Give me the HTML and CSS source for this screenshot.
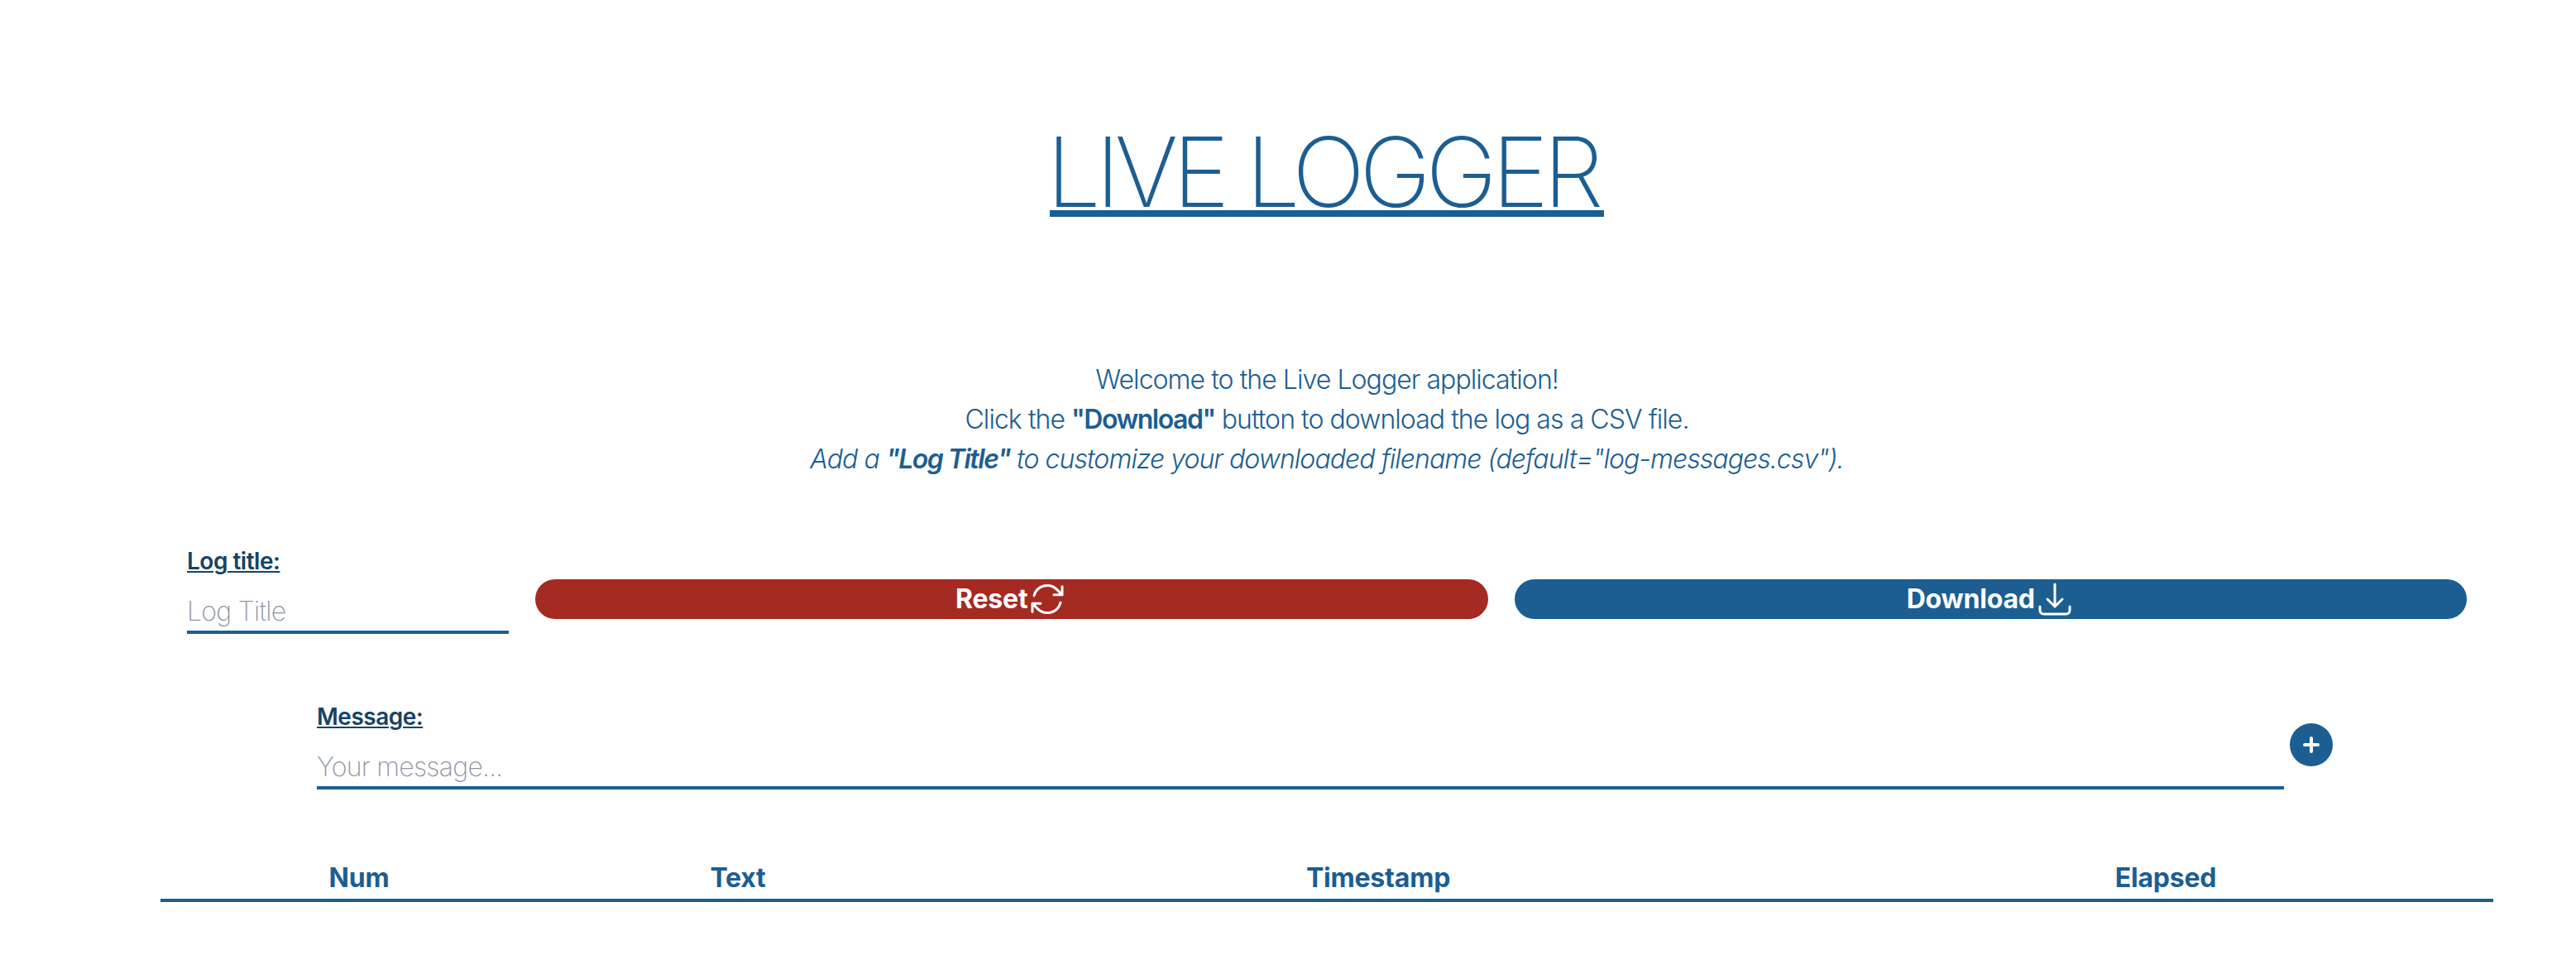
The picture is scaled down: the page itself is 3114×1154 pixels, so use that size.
FILE: index.html
```html
<!DOCTYPE html>
<html lang="en">
<head>
<meta charset="utf-8">
<title>Live Logger</title>
<link rel="stylesheet" href="styles.css">
</head>
<body>
<main class="page">
  <h1 class="title">LIVE LOGGER</h1>
  <section class="intro">
    <p>Welcome to the Live Logger application!</p>
    <p>Click the <strong>"Download"</strong> button to download the log as a CSV file.</p>
    <p><em>Add a <strong>"Log Title"</strong> to customize your downloaded filename (default="log-messages.csv").</em></p>
  </section>
  <section class="toolbar">
    <div class="field field-title">
      <label class="label" for="log-title">Log title:</label>
      <input class="input" id="log-title" type="text" placeholder="Log Title">
    </div>
    <button class="button button-reset" type="button">Reset
      <svg class="icon" viewBox="0 0 24 24"><path d="M16.023 9.348h4.992v-.001M2.985 19.644v-4.992m0 0h4.992m-4.993 0l3.181 3.183a8.25 8.25 0 0013.803-3.7M4.031 9.865a8.25 8.25 0 0113.803-3.7l3.181 3.182m0-4.991v4.99"/></svg>
    </button>
    <button class="button button-download" type="button">Download
      <svg class="icon" viewBox="0 0 24 24"><path d="M3 16.5v2.25A2.25 2.25 0 005.25 21h13.5A2.25 2.25 0 0021 18.75V16.5M16.5 12L12 16.5m0 0L7.5 12m4.5 4.5V3"/></svg>
    </button>
  </section>
  <section class="composer">
    <div class="field field-message">
      <label class="label" for="message">Message:</label>
      <input class="input" id="message" type="text" placeholder="Your message...">
    </div>
    <button class="add" type="button" aria-label="Add message">
      <svg class="add-icon" viewBox="0 0 20 20"><path d="M10 2v16M2 10h16"/></svg>
    </button>
  </section>
  <table class="log">
    <thead>
      <tr>
        <th class="col-num">Num</th>
        <th class="col-text">Text</th>
        <th class="col-time">Timestamp</th>
        <th class="col-elapsed">Elapsed</th>
      </tr>
    </thead>
  </table>
</main>
</body>
</html>
```
FILE: styles.css
```css
* { box-sizing: border-box; margin: 0; padding: 0; }
body {
  background: #fefefe;
  color: #1c5e92;
  font-family: Inter, "Liberation Sans", sans-serif;
  font-size: 32px;
  font-weight: 300;
  line-height: 48px;
}
.page { width: 2820px; margin-left: 194px; padding-top: 161px; }
.title {
  width: 670px;
  margin: 0 auto;
  border-bottom: 8px solid #1c5e92;
  font-size: 117px;
  font-weight: 230;
  letter-spacing: -6.7px;
  line-height: 93px;
  text-indent: -4px;
  white-space: nowrap;
}
.intro {
  margin-top: 173px;
  letter-spacing: -0.94px;
  text-align: center;
}
.intro strong { font-weight: 600; letter-spacing: -1.5px; }
.toolbar {
  display: flex;
  align-items: center;
  gap: 32px;
  margin-top: 79px;
  padding: 0 32px;
}
.field { display: flex; flex-direction: column; align-items: flex-start; }
.field-title { width: 389px; }
.label {
  color: #164363;
  font-size: 28px;
  font-weight: 600;
  letter-spacing: -0.5px;
  line-height: 40px;
  text-decoration: underline;
  text-decoration-thickness: 2px;
  text-underline-offset: 2px;
}
.input {
  width: 100%;
  height: 52px;
  margin-top: 16px;
  border: 0;
  border-bottom: 4px solid #1c5e92;
  background: transparent;
  color: inherit;
  font: inherit;
  font-weight: 200;
  letter-spacing: -0.75px;
}
.input::placeholder { color: #8f97a5; opacity: 1; }
.button {
  display: flex;
  flex: 1;
  align-items: center;
  justify-content: center;
  height: 48px;
  margin-top: 24px;
  border: 0;
  border-radius: 24px;
  color: #fff;
  font: inherit;
  font-weight: 700;
  letter-spacing: -0.2px;
}
.button-reset { background: #a42a22; }
.button-download { background: #1c5e92; }
.icon {
  width: 48px;
  height: 48px;
  fill: none;
  stroke: currentColor;
  stroke-width: 1.5;
  stroke-linecap: round;
  stroke-linejoin: round;
}
.composer {
  display: flex;
  align-items: center;
  gap: 7px;
  margin-top: 80px;
  padding-left: 189px;
}
.field-message { width: 2378px; }
.add {
  display: flex;
  align-items: center;
  justify-content: center;
  width: 52px;
  height: 52px;
  border: 0;
  border-radius: 50%;
  background: #1c5e92;
}
.add-icon {
  width: 20px;
  height: 20px;
  fill: none;
  stroke: #fff;
  stroke-width: 4;
  stroke-linecap: round;
}
.log {
  width: 100%;
  margin-top: 80px;
  border-spacing: 0;
  table-layout: fixed;
}
.log th {
  height: 56px;
  padding-top: 2px;
  border-bottom: 4px solid #1c5e92;
  font-weight: 700;
  letter-spacing: -0.2px;
  text-align: center;
}
.col-num { width: 480px; }
.col-text { width: 436px; }
.col-time { width: 1112px; }
.col-elapsed { width: 792px; }
```
